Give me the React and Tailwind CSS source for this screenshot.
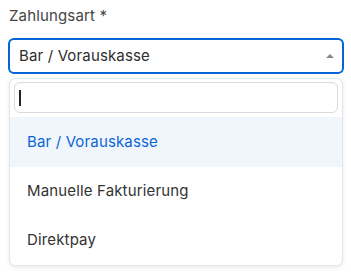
const options = ["Bar / Vorauskasse", "Manuelle Fakturierung", "Direktpay"]

const App = () => {
  return (
    <div className="w-[351px] h-[276px] bg-white px-2 pt-[6px] font-['Inter',sans-serif] tracking-[0.15px]">
      <label className="block text-[15px] leading-5 text-[#454545] ml-[1px]">Zahlungsart *</label>
      <div className="mt-3 w-[336px] h-9 flex items-center justify-between border-2 border-[#0466d6] rounded-md pl-[9px] pr-[6px]">
        <span className="text-[15px] text-[#2e2e2e]">Bar / Vorauskasse</span>
        <svg width="10" height="6" viewBox="0 0 10 6" className="mr-[1px]">
          <path d="M1 5 L5 1 L9 5 Z" fill="#8a8a8a" />
        </svg>
      </div>
      <div className="mt-1 ml-[1px] w-[334px] border border-[#e2e5e9] rounded-md bg-white shadow-[0_2px_5px_rgba(0,0,0,0.08)]">
        <div className="px-1 pt-[3px] pb-1">
          <div className="h-[31px] border border-[#d7dbe0] rounded-md flex items-center pl-1">
            <span className="w-[1.5px] h-[16px] bg-[#222]" />
          </div>
        </div>
        <ul>
          {options.map((o, i) => (
            <li
              key={o}
              className={
                i === 0
                  ? "h-[50px] flex items-center pl-[17px] text-[15px] bg-[#f1f6fd] text-[#0a66d0]"
                  : "h-[49px] flex items-center pl-[17px] text-[15px] text-[#333]"
              }
            >
              {o}
            </li>
          ))}
        </ul>
      </div>
    </div>
  )
}

export default App
